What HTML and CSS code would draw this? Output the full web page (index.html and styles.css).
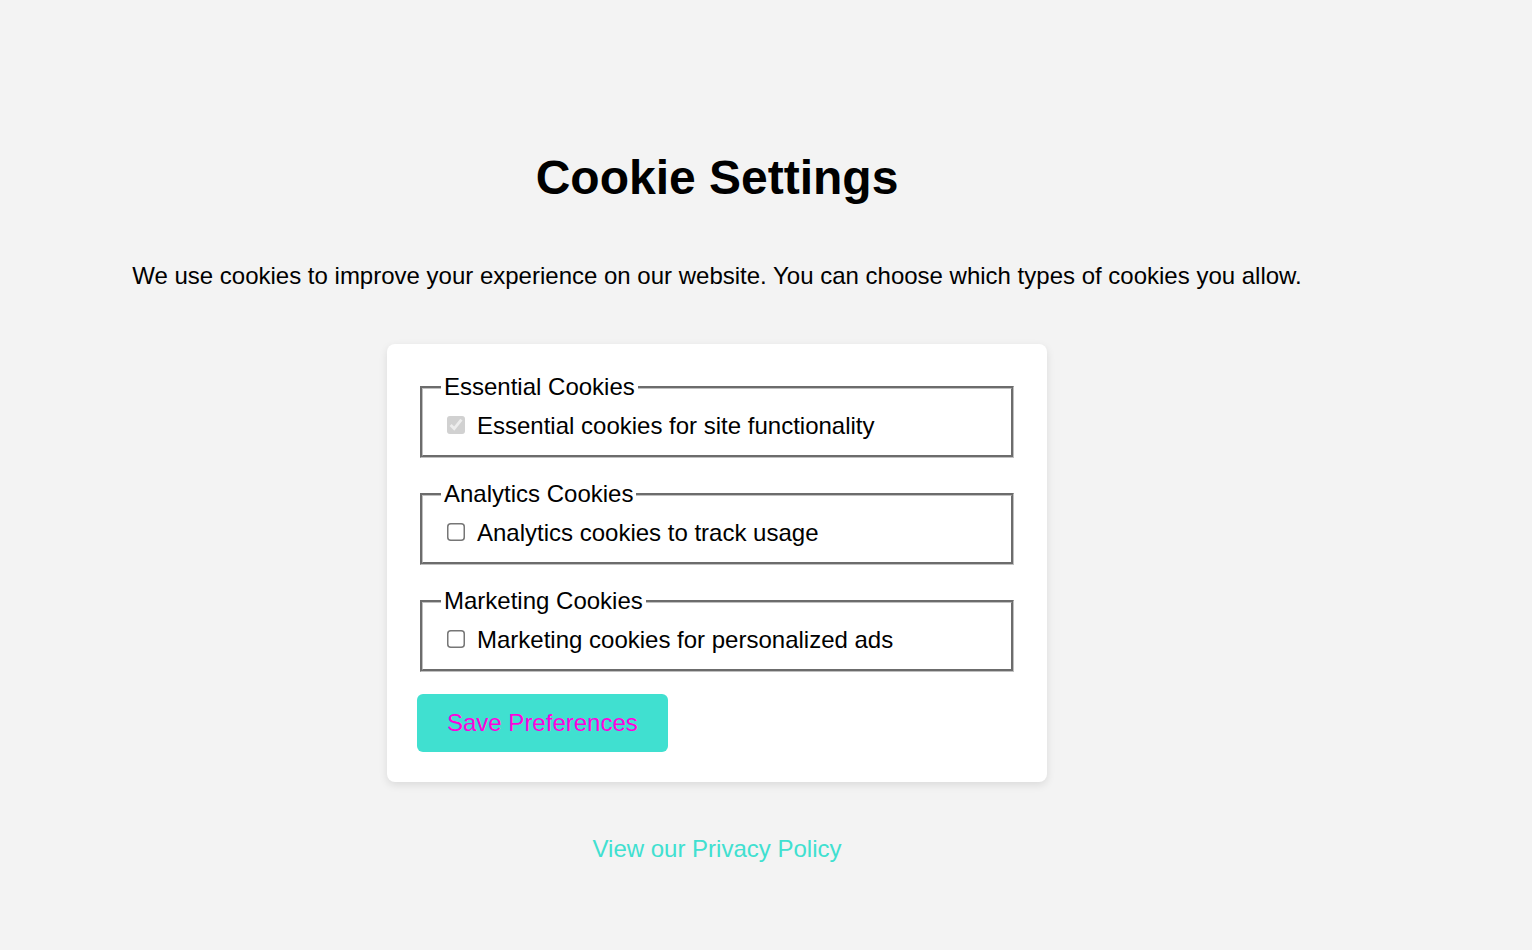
FILE: index.html
```html
<!DOCTYPE html>
<html lang="en">
<head>
<meta charset="utf-8">
<title>Cookie Settings</title>
<link rel="stylesheet" href="styles.css">
</head>
<body>
<main class="page">
  <h1 class="title">Cookie Settings</h1>
  <p class="intro">We use cookies to improve your experience on our website. You can choose which types of cookies you allow.</p>
  <form class="card">
    <fieldset class="group">
      <legend class="legend">Essential Cookies</legend>
      <label class="option"><input class="check" type="checkbox" checked disabled> Essential cookies for site functionality</label>
    </fieldset>
    <fieldset class="group">
      <legend class="legend">Analytics Cookies</legend>
      <label class="option"><input class="check" type="checkbox"> Analytics cookies to track usage</label>
    </fieldset>
    <fieldset class="group">
      <legend class="legend">Marketing Cookies</legend>
      <label class="option"><input class="check" type="checkbox"> Marketing cookies for personalized ads</label>
    </fieldset>
    <button class="save" type="button">Save Preferences</button>
  </form>
  <a class="policy" href="#">View our Privacy Policy</a>
</main>
</body>
</html>
```
FILE: styles.css
```css
* {
  box-sizing: border-box;
}

body {
  margin: 0;
  background: #f3f3f3;
  color: #000;
  font-family: "Liberation Sans", Arial, sans-serif;
  font-size: 24px;
  line-height: 28px;
}

.page {
  display: flex;
  flex-direction: column;
  align-items: center;
  padding: 150px 98px 0 0;
}

.title {
  margin: 0;
  font-size: 48px;
  line-height: 56px;
}

.intro {
  margin: 56px 0 54px;
}

.card {
  width: 100%;
  max-width: 660px;
  padding: 29px 30px 30px;
  border-radius: 8px;
  background: #fff;
  box-shadow: 0 3px 8px rgba(0, 0, 0, 0.1);
}

.group {
  margin: 0 3px 22px;
  padding: 11px 18px 15px;
  border: 3px groove #c0c0c0;
}

.legend {
  padding: 0 3px;
}

.option {
  display: flex;
  align-items: center;
  gap: 12px;
  padding-left: 6px;
}

.check {
  zoom: 1.5;
  width: 12px;
  height: 12px;
  margin: 0 0 2px;
}

.save {
  display: block;
  padding: 15px 30px;
  border: 0;
  border-radius: 6px;
  background: #40e0d0;
  color: #f0d;
  font: inherit;
}

.policy {
  margin-top: 53px;
  color: #40e0d0;
  text-decoration: none;
}
```
